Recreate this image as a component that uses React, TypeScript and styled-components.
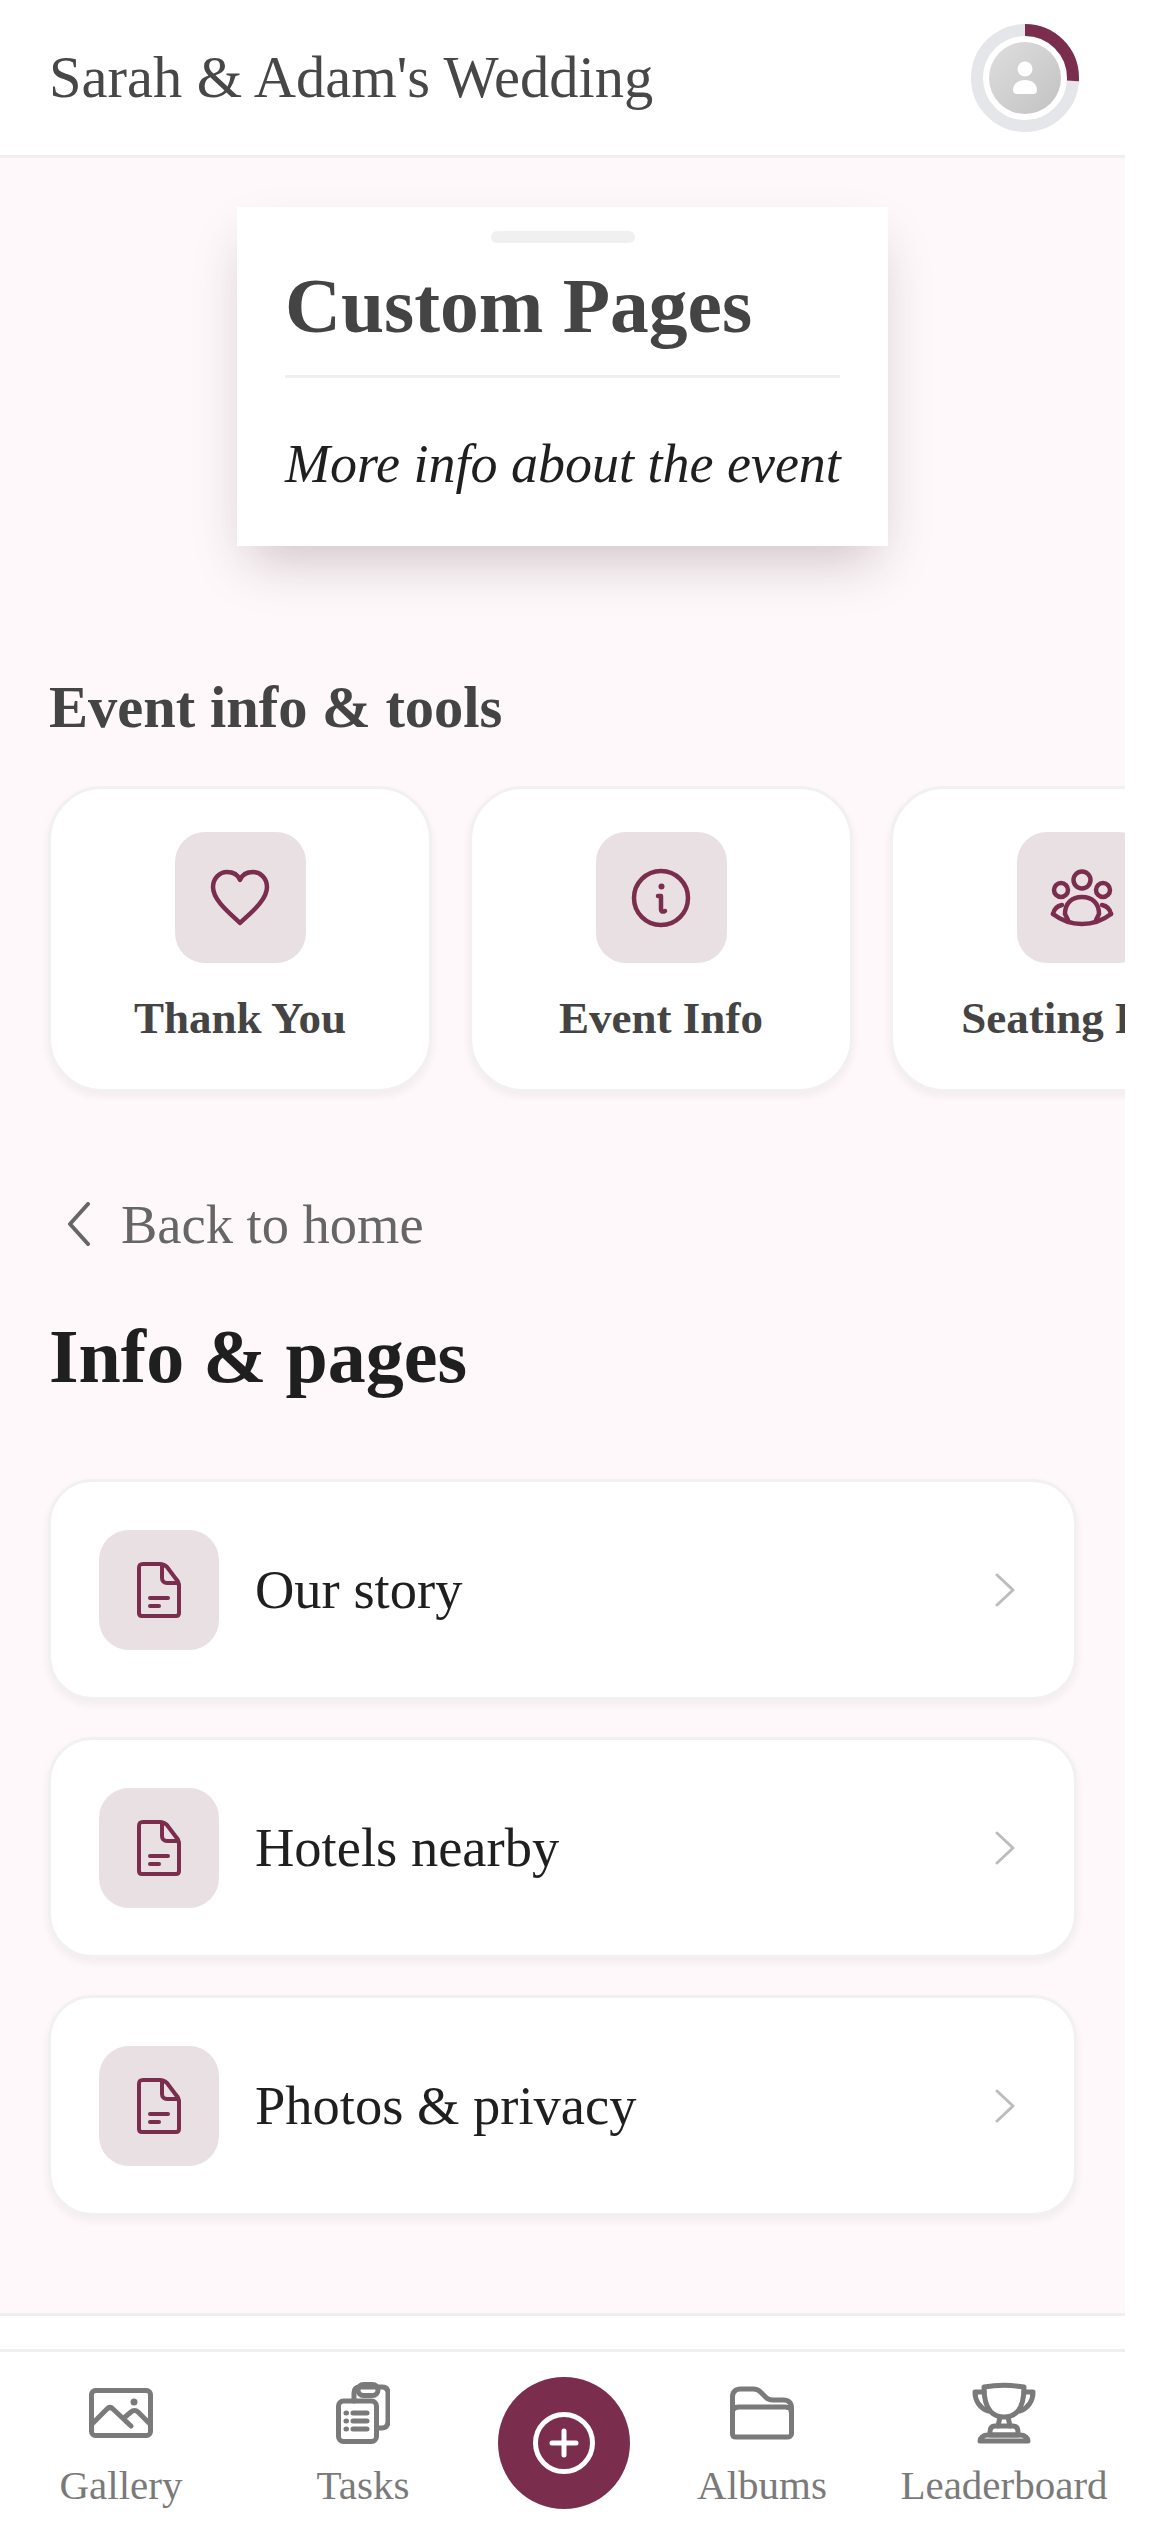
import React from 'react';
import styled, {createGlobalStyle} from 'styled-components';

const ACCENT = '#7b2d4e';
const NAV_GREY = '#7a7a7a';
const SERIF = '"Liberation Serif", "Times New Roman", serif';

const GlobalStyle = createGlobalStyle`
  html, body {
    margin: 0;
    padding: 0;
    background: #fff;
  }
  * {
    box-sizing: border-box;
  }
`;

const Page = styled.div`
  width: 1125px;
  height: 2532px;
  display: flex;
  flex-direction: column;
  overflow: hidden;
  font-family: ${SERIF};
  background: #fff;
`;

const Header = styled.header`
  height: 158px;
  flex: none;
  display: flex;
  align-items: center;
  justify-content: space-between;
  padding: 0 46px 0 49px;
  border-bottom: 3px solid #f1eff0;
`;

const EventName = styled.h1`
  margin: 0;
  font-size: 58.5px;
  font-weight: 400;
  color: #474747;
`;

const Avatar = styled.div`
  position: relative;
  width: 108px;
  height: 108px;
`;

const Main = styled.main`
  flex: 1;
  min-height: 0;
  padding-top: 49px;
  background: #fef8fa;
`;

const Hero = styled.section`
  width: 651px;
  height: 339px;
  margin: 0 auto;
  padding: 24px 48px 0;
  background: #fff;
  box-shadow: 0 25px 50px -12px rgba(60, 35, 45, 0.25);
`;

const Handle = styled.div`
  width: 144px;
  height: 12px;
  margin: 0 auto;
  border-radius: 6px;
  background: #f1f0f0;
`;

const HeroTitle = styled.h2`
  margin: 14px 0 0;
  height: 118px;
  line-height: 98px;
  font-size: 77.5px;
  font-weight: 700;
  white-space: nowrap;
  color: #444;
`;

const HeroDivider = styled.div`
  height: 3px;
  background: #f0eeef;
`;

const HeroText = styled.p`
  margin: 55px 0 0;
  font-size: 54px;
  line-height: 62px;
  font-style: italic;
  white-space: nowrap;
  color: #1f1f1f;
`;

const SectionTitle = styled.h3`
  margin: 131px 0 0 49px;
  height: 62px;
  line-height: 62px;
  font-size: 58.5px;
  font-weight: 700;
  color: #444;
`;

const ToolRow = styled.div`
  display: flex;
  gap: 37px;
  margin-top: 47px;
  padding: 0 0 8px 48px;
  overflow: hidden;
`;

const ToolCard = styled.div`
  flex: none;
  width: 384px;
  height: 306px;
  padding-top: 43px;
  display: flex;
  flex-direction: column;
  align-items: center;
  background: #fff;
  border: 3px solid #f3f0f1;
  border-radius: 54px;
  box-shadow: 0 4px 8px rgba(60, 35, 45, 0.06);
`;

const IconTile = styled.div<{$size: number}>`
  flex: none;
  width: ${p => p.$size}px;
  height: ${p => p.$size}px;
  display: flex;
  align-items: center;
  justify-content: center;
  border-radius: 30px;
  background: #e9e0e4;
`;

const ToolLabel = styled.div`
  margin-top: 28px;
  font-size: 45px;
  line-height: 54px;
  font-weight: 700;
  white-space: nowrap;
  color: #444;
`;

const BackLink = styled.div`
  display: flex;
  align-items: center;
  gap: 31px;
  margin: 94px 0 0 68px;
  height: 60px;
  font-size: 54.5px;
  color: #666;
`;

const PageTitle = styled.h2`
  margin: 56px 0 0 49px;
  height: 92px;
  line-height: 92px;
  font-size: 76px;
  font-weight: 700;
  color: #1f1f1f;
`;

const PageList = styled.div`
  display: flex;
  flex-direction: column;
  gap: 37px;
  margin: 77px 48px 0;
`;

const PageRow = styled.div`
  height: 221px;
  display: flex;
  align-items: center;
  padding: 0 59px 0 48px;
  background: #fff;
  border: 3px solid #f3f0f1;
  border-radius: 44px;
  box-shadow: 0 4px 8px rgba(60, 35, 45, 0.06);
`;

const PageName = styled.span`
  flex: 1;
  margin-left: 36px;
  font-size: 54.5px;
  color: #1f1f1f;
`;

const Footer = styled.footer`
  flex: none;
  background: #fff;
`;

const FooterStrip = styled.div`
  height: 39px;
  border-top: 3px solid #f0eeef;
  border-bottom: 3px solid #f0eeef;
`;

const Nav = styled.nav`
  height: 180px;
  display: grid;
  grid-template-columns: 242px 242px 160px 236px 248px;
`;

const NavItem = styled.div`
  display: flex;
  flex-direction: column;
  align-items: center;
  padding-top: 29px;
  color: ${NAV_GREY};
`;

const NavIcon = styled.div`
  height: 64px;
  display: flex;
  align-items: center;
  justify-content: center;
`;

const NavLabel = styled.span`
  margin-top: 16px;
  font-size: 41px;
  line-height: 48px;
  white-space: nowrap;
`;

const FabCell = styled.div`
  display: flex;
  justify-content: center;
  padding-top: 25px;
`;

const Fab = styled.button`
  width: 132px;
  height: 132px;
  padding: 0;
  display: flex;
  align-items: center;
  justify-content: center;
  border: none;
  border-radius: 50%;
  background: ${ACCENT};
`;

const stroke = {fill: 'none', stroke: 'currentColor', strokeLinecap: 'round', strokeLinejoin: 'round'} as const;

const AvatarRing = () => (
    <svg width="108" height="108" viewBox="0 0 108 108">
        <defs>
            <linearGradient id="avatarFill" x1="0" y1="0" x2="1" y2="1">
                <stop offset="0" stopColor="#dedede"/>
                <stop offset="1" stopColor="#c2c2c2"/>
            </linearGradient>
        </defs>
        <circle cx="54" cy="54" r="48" fill="none" stroke="#e5e6e9" strokeWidth="12"/>
        <circle cx="54" cy="54" r="48" fill="none" stroke={ACCENT} strokeWidth="12" pathLength="100"
                strokeDasharray="26 74" transform="rotate(-90 54 54)"/>
        <circle cx="54" cy="54" r="36" fill="url(#avatarFill)"/>
        <circle cx="54" cy="45" r="7.5" fill="#fff"/>
        <path d="M42 66c0-6 5-10 12-10s12 4 12 10c0 3-2 4-4 4H46c-2 0-4-1-4-4z" fill="#fff"/>
    </svg>
);

const HeartIcon = () => (
    <svg width="60" height="58" viewBox="0 0 60 58" color={ACCENT}>
        <path {...stroke} strokeWidth="4.5"
              d="M30 54C22 46 3 32 3 18 3 9 10 3 17 3c6 0 11 3 13 8 2-5 7-8 13-8 7 0 14 6 14 15 0 14-19 28-27 36z"/>
    </svg>
);

const InfoIcon = () => (
    <svg width="60" height="60" viewBox="0 0 60 60" color={ACCENT}>
        <circle {...stroke} strokeWidth="4.5" cx="30" cy="30" r="27"/>
        <circle cx="30.5" cy="18.5" r="3" fill={ACCENT}/>
        <path {...stroke} strokeWidth="4.5" d="M27 28h3v13c0 3 2 3 4 2"/>
    </svg>
);

const GroupIcon = () => (
    <svg width="64" height="58" viewBox="0 0 64 58" color={ACCENT}>
        <g {...stroke} strokeWidth="4.5">
            <circle cx="32" cy="11" r="8.5"/>
            <circle cx="11" cy="21" r="7"/>
            <circle cx="53" cy="21" r="7"/>
            <path d="M18 51l-3-6C15 34 22 28 32 28s17 6 17 17l-3 6"/>
            <path d="M3 45c9 7 19 10 29 10s20-3 29-10"/>
            <path d="M3 45c1-5 4-8 9-9"/>
            <path d="M61 45c-1-5-4-8-9-9"/>
        </g>
    </svg>
);

const DocIcon = () => (
    <svg width="44" height="56" viewBox="0 0 44 56" color={ACCENT}>
        <g {...stroke} strokeWidth="4">
            <path d="M6 2h17c3 0 5 1 7 3l9 12c2 2 3 4 3 7v27c0 2-1 3-3 3H5c-2 0-3-1-3-3V6c0-3 1-4 4-4z"/>
            <path d="M25 3v13c0 3 2 5 5 5h11"/>
            <path d="M13 36h18"/>
            <path d="M13 44h9"/>
        </g>
    </svg>
);

const Chevron = ({left, color, w, h, sw}: { left?: boolean; color: string; w: number; h: number; sw: number }) => (
    <svg width={w} height={h} viewBox={`0 0 ${w} ${h}`} style={{flex: 'none'}}>
        <path fill="none" stroke={color} strokeWidth={sw} strokeLinecap="round" strokeLinejoin="round"
              d={left
                  ? `M${w - 2} 2 2 ${h / 2} ${w - 2} ${h - 2}`
                  : `M2 2 ${w - 2} ${h / 2} 2 ${h - 2}`}/>
    </svg>
);

const GalleryIcon = () => (
    <svg width="64" height="50" viewBox="0 0 64 50">
        <g {...stroke} strokeWidth="5">
            <rect x="2.5" y="2.5" width="59" height="45" rx="4"/>
            <path d="M3 36 18 21c2-2 4-2 6 0l18 17"/>
            <path d="M36 29l6-5c2-2 5-2 7 0l12 12"/>
        </g>
        <circle cx="45" cy="14" r="3.5" fill="currentColor"/>
    </svg>
);

const TasksIcon = () => (
    <svg width="54" height="62" viewBox="0 0 54 62">
        <g {...stroke} strokeWidth="5">
            <path d="M18 19v-8c0-4 2-6 6-6h22c4 0 6 2 6 6v28c0 5-2 7-6 7h-5"/>
            <rect x="22" y="2.5" width="20" height="11" rx="5.5"/>
            <rect x="2.5" y="19" width="38" height="40.5" rx="5"/>
            <path d="M17 31h14M17 39h14M17 47h14"/>
            <path d="M10 31h.5M10 39h.5M10 47h.5"/>
        </g>
    </svg>
);

const FolderIcon = () => (
    <svg width="64" height="54" viewBox="0 0 64 54">
        <g {...stroke} strokeWidth="5">
            <path d="M2.5 11c0-5 3-8 8-8h13c3 0 5 1 7 3l5 5c2 2 4 3 7 3h11c5 0 8 3 8 8v26c0 2-2 3-4 3H6c-2 0-3.5-1-3.5-3z"/>
            <path d="M3 24c1-2 3-3 6-3h46c3 0 6 1 6 4"/>
        </g>
    </svg>
);

const TrophyIcon = () => (
    <svg width="64" height="62" viewBox="0 0 64 62">
        <g {...stroke} strokeWidth="5">
            <path d="M12 5c12-2 28-2 40 0 0 12-2 20-7 25-3 3-8 5-13 5s-10-2-13-5c-5-5-7-13-7-25z"/>
            <path d="M12 10H3c0 9 5 16 13 19"/>
            <path d="M52 10h9c0 9-5 16-13 19"/>
            <path d="M28 35l-2 9M36 35l2 9"/>
            <path d="M18 50c0-4 2-6 5-6h18c3 0 5 2 5 6v3H18z"/>
            <path d="M8 59c0-3 3-6 8-6h32c5 0 8 3 8 6z"/>
        </g>
    </svg>
);

const AddIcon = () => (
    <svg width="64" height="64" viewBox="0 0 64 64">
        <circle cx="32" cy="32" r="28.5" fill="none" stroke="#fff" strokeWidth="5"/>
        <path d="M32 20v24M20 32h24" fill="none" stroke="#fff" strokeWidth="5" strokeLinecap="round"/>
    </svg>
);

const tools = [
    {label: 'Thank You', icon: <HeartIcon/>},
    {label: 'Event Info', icon: <InfoIcon/>},
    {label: 'Seating Plan', icon: <GroupIcon/>},
];

const pages = ['Our story', 'Hotels nearby', 'Photos & privacy'];

function App() {
    return (
        <Page>
            <GlobalStyle/>
            <Header>
                <EventName>Sarah &amp; Adam's Wedding</EventName>
                <Avatar><AvatarRing/></Avatar>
            </Header>

            <Main>
                <Hero>
                    <Handle/>
                    <HeroTitle>Custom Pages</HeroTitle>
                    <HeroDivider/>
                    <HeroText>More info about the event</HeroText>
                </Hero>

                <SectionTitle>Event info &amp; tools</SectionTitle>
                <ToolRow>
                    {tools.map(t => <ToolCard key={t.label}>
                        <IconTile $size={131}>{t.icon}</IconTile>
                        <ToolLabel>{t.label}</ToolLabel>
                    </ToolCard>)}
                </ToolRow>

                <BackLink>
                    <Chevron left color="#666" w={22} h={44} sw={4}/>
                    Back to home
                </BackLink>
                <PageTitle>Info &amp; pages</PageTitle>

                <PageList>
                    {pages.map(name => <PageRow key={name}>
                        <IconTile $size={120}><DocIcon/></IconTile>
                        <PageName>{name}</PageName>
                        <Chevron color="#bcbcbc" w={20} h={34} sw={3}/>
                    </PageRow>)}
                </PageList>
            </Main>

            <Footer>
                <FooterStrip/>
                <Nav>
                    <NavItem><NavIcon><GalleryIcon/></NavIcon><NavLabel>Gallery</NavLabel></NavItem>
                    <NavItem><NavIcon><TasksIcon/></NavIcon><NavLabel>Tasks</NavLabel></NavItem>
                    <FabCell><Fab><AddIcon/></Fab></FabCell>
                    <NavItem><NavIcon><FolderIcon/></NavIcon><NavLabel>Albums</NavLabel></NavItem>
                    <NavItem><NavIcon><TrophyIcon/></NavIcon><NavLabel>Leaderboard</NavLabel></NavItem>
                </Nav>
            </Footer>
        </Page>
    );
}

export default App;
